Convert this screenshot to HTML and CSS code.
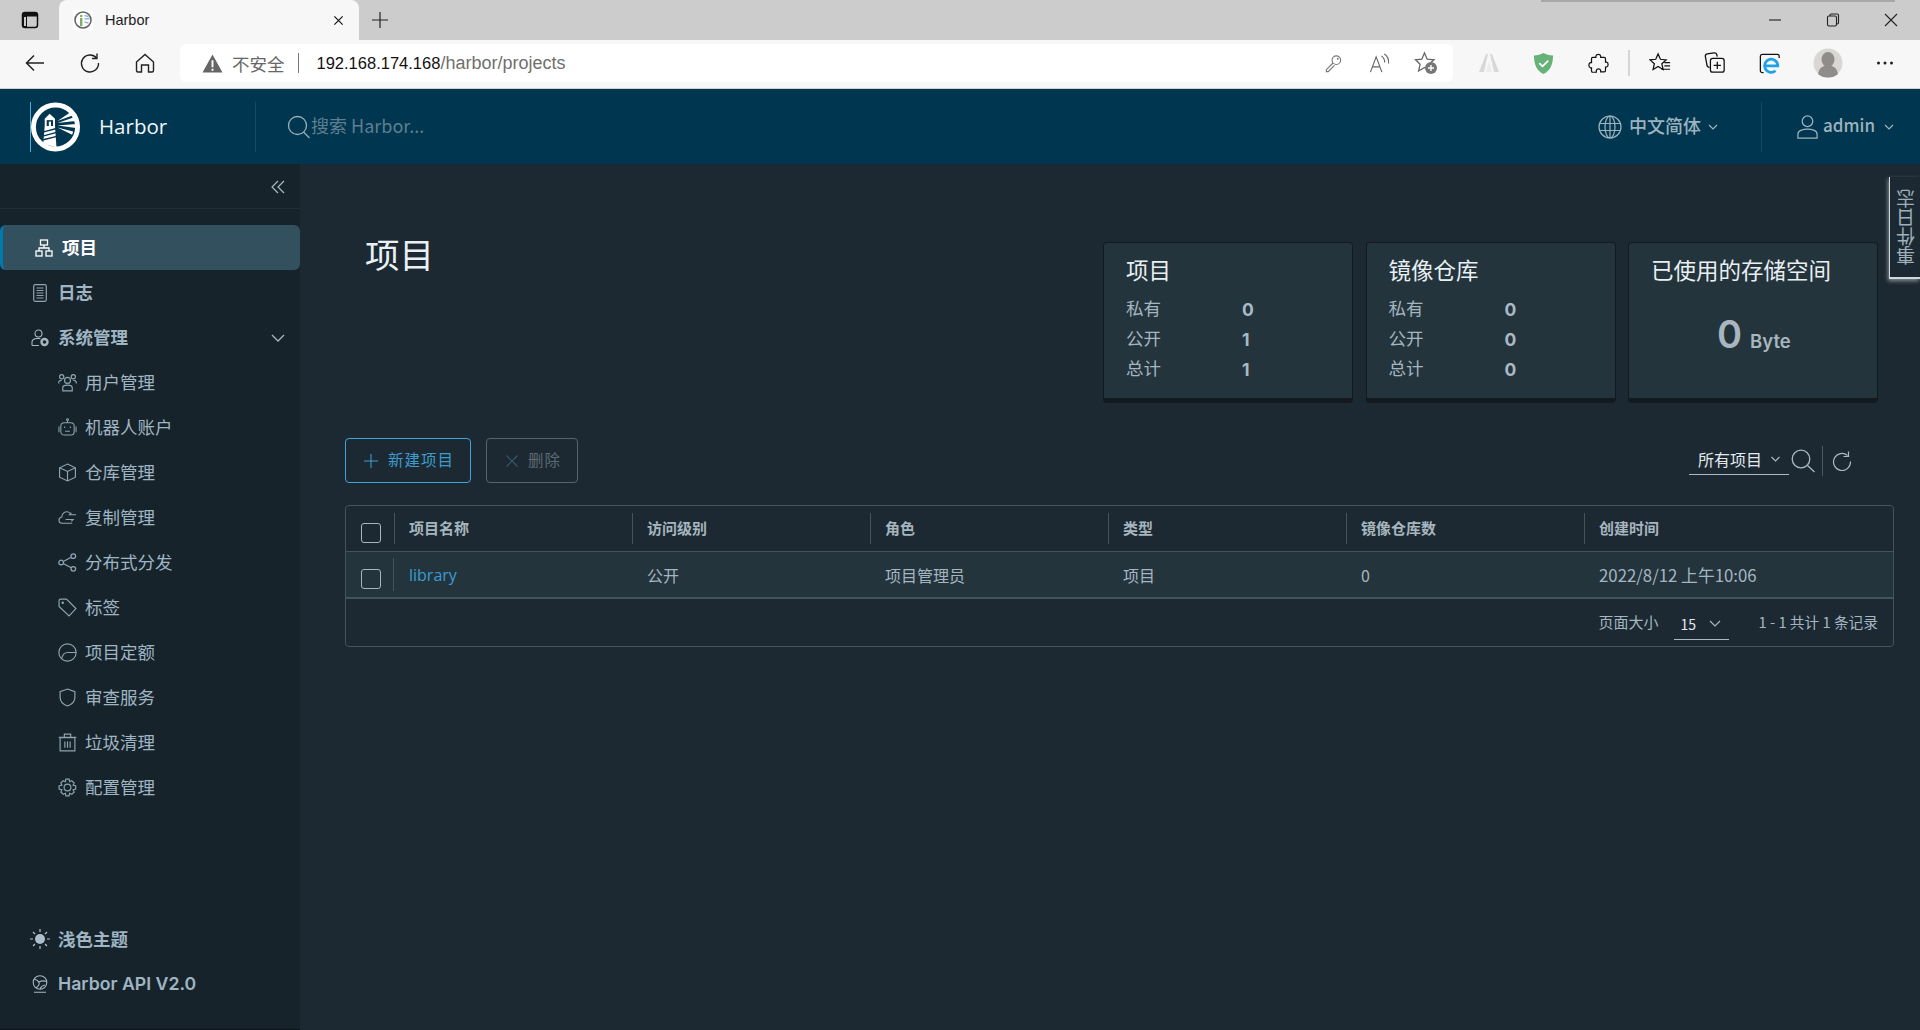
FILE: index.html
```html
<!DOCTYPE html>
<html lang="zh-CN">
<head>
<meta charset="utf-8">
<title>Harbor</title>
<link rel="stylesheet" href="styles.css">
</head>
<body>
<div class="app">
  <div class="tabstrip">
    <svg class="ico strip-side" viewBox="0 0 20 20"><rect x="2.5" y="2.5" width="15" height="15" rx="2.5" fill="none" stroke="#111" stroke-width="1.5"/><path d="M3 3h14v3.5H3zM3 6h4v11H3z" fill="#111"/><rect x="4" y="7" width="2" height="9" fill="#ccc"/></svg>
    <div class="tab">
      <svg class="ico fav" viewBox="0 0 20 20"><rect width="20" height="20" fill="#fff"/><circle cx="10" cy="10" r="8" fill="none" stroke="#666" stroke-width="1.6"/><rect x="7" y="8" width="2.4" height="8" fill="#7fae5c"/><circle cx="8.2" cy="6" r="1.3" fill="#7fae5c"/><path d="M11.5 5.5l4 1M11.5 9l5-.5M11.5 12l4 1" stroke="#8fb8e0" stroke-width="1.4"/></svg>
      <span class="tab-title">Harbor</span>
      <svg class="ico tab-x" viewBox="0 0 12 12"><path d="M1.5 1.5l9 9M10.5 1.5l-9 9" stroke="#111" stroke-width="1.3"/></svg>
    </div>
    <svg class="ico newtab" viewBox="0 0 18 18"><path d="M9 1v16M1 9h16" stroke="#222" stroke-width="1.2"/></svg>
    <div class="strip-shadow"></div>
    <div class="winbtns">
      <svg class="ico win" viewBox="0 0 14 14"><path d="M1 7h12" stroke="#222" stroke-width="1.1"/></svg>
      <svg class="ico win" viewBox="0 0 14 14"><rect x="1.5" y="3" width="9" height="10" rx="1.5" fill="none" stroke="#222" stroke-width="1.1"/><path d="M4 3V2.2Q4 1 5.2 1h6Q12.500 1 12.500 2.300v7.500Q12.500 11 11 11" fill="none" stroke="#222" stroke-width="1.1"/></svg>
      <svg class="ico win" viewBox="0 0 14 14"><path d="M1 1l12 12M13 1L1 13" stroke="#222" stroke-width="1.1"/></svg>
    </div>
  </div>

  <div class="toolbar">
    <svg class="ico tb back" viewBox="0 0 22 22"><path d="M20 11H3M10 3.500L2.500 11l7.500 7.500" fill="none" stroke="#222" stroke-width="1.500"/></svg>
    <svg class="ico tb reload" viewBox="0 0 22 22"><path d="M17.500 6A8.500 8.500 0 1 0 19.500 11" fill="none" stroke="#222" stroke-width="1.400"/><path d="M18 1.500V6.500H13" fill="none" stroke="#222" stroke-width="1.400"/></svg>
    <svg class="ico tb home" viewBox="0 0 22 22"><path d="M2.500 10L11 2.500 19.500 10v8.500q0 1.500-1.500 1.500h-3.500v-7h-7v7H4q-1.500 0-1.500-1.500z" fill="none" stroke="#222" stroke-width="1.400"/></svg>
    <div class="addr">
      <svg class="ico warn" viewBox="0 0 22 20"><path d="M11 .5l10.500 19H.5z" fill="#666"/><path d="M10 6.500h2v7.500h-2zM10 15.500h2v2h-2z" fill="#fff"/></svg>
      <span class="addr-warn">不安全</span>
      <span class="addr-sep"></span>
      <span class="url"><span class="url-host">192.168.174.168</span>/harbor/projects</span>
      <svg class="ico key" viewBox="0 0 20 20"><circle cx="13" cy="6.500" r="4.500" fill="none" stroke="#777" stroke-width="1.200"/><path d="M9.500 9.500L2.500 16.500V18.500H4.500L11 12" fill="none" stroke="#777" stroke-width="1.200"/><circle cx="14.500" cy="5" r="1" fill="#777"/></svg>
      <svg class="ico readaloud" viewBox="0 0 22 22"><path d="M1.500 20L7.500 4l6 16M3.500 14.500h8" fill="none" stroke="#666" stroke-width="1.200"/><path d="M13 3q3.500 2.500 3.500 7M16 1q5 3 4.500 10" fill="none" stroke="#666" stroke-width="1.200"/></svg>
      <svg class="ico addfav" viewBox="0 0 24 24"><path d="M10.500 2l2.700 6.200 6.800.6-5.100 4.500 1.500 6.700-5.900-3.500-5.900 3.500 1.500-6.700L1.500 8.800l6.300-.6z" fill="none" stroke="#666" stroke-width="1.300"/><circle cx="17" cy="17" r="6" fill="#777"/><path d="M17 14v6M14 17h6" stroke="#fff" stroke-width="1.400"/></svg>
    </div>
    <svg class="ico ext-m" viewBox="0 0 22 22"><path d="M1 20L8 2h2l-4 18zM21 20L14 2h-2l4 18z" fill="#d8d8d8"/><path d="M8 20l3-11 3 11z" fill="#ececec"/></svg>
    <svg class="ico ext-s" viewBox="0 0 22 24"><path d="M11 1c3 1.600 6 2.400 10 2.500C21 13 18 19.500 11 23 4 19.500 1 13 1 3.500 5 3.400 8 2.600 11 1z" fill="#67b279"/><path d="M6.500 11.500l3.500 3.500 6-6" fill="none" stroke="#fff" stroke-width="1.800"/></svg>
    <svg class="ico ext-p" viewBox="0 0 24 24"><path d="M9 3.500q.5-2 2.800-2t2.700 2v1.500h4q1.500 0 1.500 1.500v4h1.200q1.800.5 1.800 2.700t-1.800 2.800H20v4q0 1.500-1.500 1.500h-4v-1.500q-.5-1.800-2.500-1.800t-2.500 1.800V22h-4Q4 22 4 20.500V17H2.800Q1 16.500 1 14t1.800-3H4V6.500Q4 5 5.500 5H9z" fill="none" stroke="#111" stroke-width="1.400"/></svg>
    <span class="tb-sep"></span>
    <svg class="ico ext-f" viewBox="0 0 24 24"><path d="M9.500 2l2.400 5.600 6 .6-4.500 4 1.300 6-5.200-3.100-5.200 3.100 1.300-6L1 8.200l6-.6z" fill="none" stroke="#111" stroke-width="1.300"/><path d="M16 11h6M16 14.500h6M13 18h9" stroke="#111" stroke-width="1.300"/></svg>
    <svg class="ico ext-c" viewBox="0 0 24 24"><path d="M6 17Q3 16 3 13L1.500 5Q1 2.500 3.500 2L11 1q2.500-.2 3 2l.4 2" fill="none" stroke="#111" stroke-width="1.400"/><rect x="7" y="7" width="15" height="15" rx="2.500" fill="none" stroke="#111" stroke-width="1.400"/><path d="M14.500 10.500v8M10.500 14.500h8" stroke="#111" stroke-width="1.400"/></svg>
    <svg class="ico ext-e" viewBox="0 0 24 24"><path d="M5 22H4q-2.500 0-2.500-2.500v-15Q1.500 2 4 2h16q2 0 2 2v2" fill="none" stroke="#111" stroke-width="1.400"/><path d="M6.500 14.500h14a7.200 7.200 0 1 0-2.500 5.500" fill="none" stroke="#1ea3e6" stroke-width="3"/></svg>
    <svg class="ico avatar" viewBox="0 0 30 30"><circle cx="15" cy="15" r="14.500" fill="#d9d7d3"/><ellipse cx="15" cy="11.500" rx="6.500" ry="7.500" fill="#8f8c89"/><path d="M5 26q1-8.500 10-8.500T25 26q-4 3.500-10 3.500T5 26z" fill="#8f8c89"/></svg>
    <svg class="ico more" viewBox="0 0 18 4"><circle cx="2.500" cy="2" r="1.500" fill="#222"/><circle cx="9" cy="2" r="1.500" fill="#222"/><circle cx="15.500" cy="2" r="1.500" fill="#222"/></svg>
  </div>

  <header class="nav">
    <div class="brand">
      <svg class="ico logo" viewBox="0 0 50 50">
        <circle cx="25" cy="25" r="22.500" fill="#00364f" stroke="#fff" stroke-width="5"/>
        <path d="M19 11.500l5.500 5V24l1.500 22-13.500-4 1.500-18v-7.500z" fill="#fff"/>
        <rect x="16" y="18" width="6.500" height="6" fill="#00364f"/>
        <rect x="18.200" y="19.500" width="2.200" height="4.500" fill="#fff"/>
        <path d="M13 30l13-3.500M13 34l13-3.500M12.500 38l14-3.500" stroke="#00364f" stroke-width="1.400"/>
        <path d="M27 19l14-9.500 2 3.500zM27 21l17-6 1.500 4zM27 23.500l19-1.500v4zM27 25.500l16 4-1 3.500z" fill="#fff"/>
      </svg>
      <span class="brand-name">Harbor</span>
    </div>
    <div class="nav-search">
      <svg class="ico s-ico" viewBox="0 0 24 24"><circle cx="10.500" cy="10.500" r="9" fill="none" stroke="#9bb0bb" stroke-width="1.300"/><path d="M16.500 17l6 6" stroke="#9bb0bb" stroke-width="1.300"/></svg>
      <span class="s-text">搜索 Harbor...</span>
    </div>
    <div class="nav-right">
      <div class="nav-lang">
        <svg class="ico globe" viewBox="0 0 24 24"><g fill="none" stroke="#9db3be" stroke-width="1.200"><circle cx="12" cy="12" r="11"/><ellipse cx="12" cy="12" rx="5" ry="11"/><path d="M12 1v22M1.500 8.500h21M1.500 15.500h21"/></g></svg>
        <span class="nav-label">中文简体</span>
        <svg class="ico chev-s" viewBox="0 0 10 6"><path d="M1 1l4 4 4-4" fill="none" stroke="#9db3be" stroke-width="1.200"/></svg>
      </div>
      <div class="nav-user">
        <svg class="ico user" viewBox="0 0 24 26"><circle cx="12" cy="7" r="5.500" fill="none" stroke="#9db3be" stroke-width="1.300"/><path d="M2 24.500v-4q0-3 3-4 7-2.500 14 0 3 1 3 4v4z" fill="none" stroke="#9db3be" stroke-width="1.300"/></svg>
        <span class="nav-label">admin</span>
        <svg class="ico chev-s" viewBox="0 0 10 6"><path d="M1 1l4 4 4-4" fill="none" stroke="#9db3be" stroke-width="1.200"/></svg>
      </div>
    </div>
  </header>

  <div class="main">
    <aside class="side">
      <div class="collapse">
        <svg class="ico dbl" viewBox="0 0 14 14"><path d="M7 1L1 7l6 6M13 1L7 7l6 6" fill="none" stroke="#a8bac4" stroke-width="1.200"/></svg>
      </div>
      <nav class="side-nav">
        <a class="item top active">
          <svg class="ico top-ico" viewBox="0 0 18 18"><g fill="none" stroke="#fff" stroke-width="1.300"><rect x="5.500" y="1" width="7" height="5"/><rect x="1" y="12" width="6" height="5"/><rect x="11" y="12" width="6" height="5"/><path d="M9 6v3M4 12V9h10v3"/></g></svg>
          <b>项目</b>
        </a>
        <a class="item top">
          <svg class="ico top-ico log" viewBox="0 0 14 18"><g fill="none" stroke="#8fa4b0" stroke-width="1.200"><rect x=".7" y=".7" width="12.600" height="16.600" rx="1.500"/><path d="M3.500 4h7M3.500 6.500h7M3.500 9h7M3.500 11.500h7M3.500 14h7"/></g></svg>
          <b>日志</b>
        </a>
        <a class="item top sys">
          <svg class="ico top-ico sysi" viewBox="0 0 18 18"><g fill="none" stroke="#a5b7c1" stroke-width="1.100"><circle cx="7.500" cy="4.500" r="3.500"/><path d="M1 16.500V13q0-2.500 3-3.300 3-.7 5.500 0M1 16.500h7"/></g><circle cx="13.500" cy="13" r="3" fill="none" stroke="#a5b7c1" stroke-width="2.400"/></svg>
          <b>系统管理</b>
          <svg class="ico sys-chev" viewBox="0 0 14 8"><path d="M1 1l6 6 6-6" fill="none" stroke="#a5b7c1" stroke-width="1.300"/></svg>
        </a>
        <a class="item sub">
          <svg class="ico sub-ico" viewBox="0 0 18 18"><g fill="none" stroke="#8fa4b0" stroke-width="1.100"><circle cx="9" cy="7" r="2.800"/><path d="M4.500 17v-3q0-2.500 4.500-2.500t4.500 2.500v3z"/><circle cx="3.500" cy="3.500" r="2"/><circle cx="14.500" cy="3.500" r="2"/><path d="M.7 10V8.500Q1 7 3.500 7M17.300 10V8.500Q17 7 14.500 7"/></g></svg>
          <span>用户管理</span>
        </a>
        <a class="item sub">
          <svg class="ico sub-ico" viewBox="0 0 20 20"><g fill="none" stroke="#8fa4b0" stroke-width="1.100"><rect x="3" y="5" width="14" height="13" rx="3.500"/><path d="M10 5V2.500M1 9v6M19 9v6"/><circle cx="10" cy="1.800" r="1"/><path d="M7 9v1.500M13 9v1.500M7.500 14h5"/></g></svg>
          <span>机器人账户</span>
        </a>
        <a class="item sub">
          <svg class="ico sub-ico" viewBox="0 0 18 18"><g fill="none" stroke="#8fa4b0" stroke-width="1.100"><path d="M9 1l7.500 3.500v9L9 17l-7.500-3.500v-9z"/><path d="M1.500 4.500L9 8l7.500-3.500M9 8v9"/></g></svg>
          <span>仓库管理</span>
        </a>
        <a class="item sub">
          <svg class="ico sub-ico" viewBox="0 0 20 18"><g fill="none" stroke="#8fa4b0" stroke-width="1.100"><path d="M15 15H4Q1 15 1 12t3-3.500Q4.500 3.500 9 3q3-.2 5 2.500"/><path d="M19 6h-7l2-2M8 11h8l-2 2"/></g></svg>
          <span>复制管理</span>
        </a>
        <a class="item sub">
          <svg class="ico sub-ico" viewBox="0 0 18 18"><g fill="none" stroke="#8fa4b0" stroke-width="1.200"><circle cx="3" cy="9" r="2.200"/><circle cx="14.500" cy="3" r="2.200"/><circle cx="14.500" cy="15" r="2.200"/><path d="M5 8l7.500-4M5 10l7.500 4"/></g></svg>
          <span>分布式分发</span>
        </a>
        <a class="item sub">
          <svg class="ico sub-ico" viewBox="0 0 18 18"><g fill="none" stroke="#8fa4b0" stroke-width="1.100"><path d="M1 2.500Q1 1 2.500 1H8l9 9-6.500 7L1 8z"/><circle cx="4.500" cy="4.500" r=".7"/></g></svg>
          <span>标签</span>
        </a>
        <a class="item sub">
          <svg class="ico sub-ico" viewBox="0 0 18 18"><g fill="none" stroke="#8fa4b0" stroke-width="1.100"><circle cx="9" cy="9" r="8.200"/><path d="M3.500 14.500Q5 9 9 9h8"/></g></svg>
          <span>项目定额</span>
        </a>
        <a class="item sub">
          <svg class="ico sub-ico" viewBox="0 0 18 18"><path d="M9 1l7 2.500V9q0 5.500-7 8-7-2.500-7-8V3.500z" fill="none" stroke="#8fa4b0" stroke-width="1.100"/></svg>
          <span>审查服务</span>
        </a>
        <a class="item sub">
          <svg class="ico sub-ico" viewBox="0 0 18 18"><g fill="none" stroke="#8fa4b0" stroke-width="1.100"><path d="M2 4.500h14V17H2zM.5 4h17M6 3.500V1h6v2.500M6.500 8v6M9 8v6M11.500 8v6"/></g></svg>
          <span>垃圾清理</span>
        </a>
        <a class="item sub">
          <svg class="ico sub-ico" viewBox="0 0 18 18"><g fill="none" stroke="#8fa4b0" stroke-width="1.100"><circle cx="9" cy="9" r="3.200"/><path d="M7.500 1h3l.5 2.500 2-1 2.300 2.200-1 2 2.500.8v3l-2.500.8 1 2L13 15.500l-2-1-.5 2.500h-3L7 14.500l-2 1-2.300-2.200 1-2L1 10.500v-3l2.700-.8-1-2L5 2.500l2 1z"/></g></svg>
          <span>配置管理</span>
        </a>
      </nav>
      <div class="side-foot">
        <a class="item top foot">
          <svg class="ico top-ico sun" viewBox="0 0 20 20"><circle cx="10" cy="10" r="5" fill="#aebfc9"/><path d="M10 0v3M10 17v3M0 10h3M17 10h3M3 3l2 2M15 15l2 2M3 17l2-2M15 5l2-2" stroke="#aebfc9" stroke-width="1.200"/></svg>
          <b>浅色主题</b>
        </a>
        <a class="item top foot">
          <svg class="ico top-ico api" viewBox="0 0 18 18"><g fill="none" stroke="#a5b7c1" stroke-width="1.100"><circle cx="9" cy="7.500" r="6.800"/><path d="M3 4q4 1 5 3.500t-3 5.500M8 7q4-2 7-.5M9 14q1-3 5-4M3 17.300h12"/></g></svg>
          <b class="latin">Harbor API V2.0</b>
        </a>
      </div>
    </aside>

    <section class="content">
      <div class="log-tab"><span>事件日志</span></div>
      <div class="summary">
        <h1 class="title">项目</h1>
        <div class="cards">
          <div class="card">
            <h2>项目</h2>
            <div class="stat"><span>私有</span><b>0</b></div>
            <div class="stat"><span>公开</span><b>1</b></div>
            <div class="stat"><span>总计</span><b>1</b></div>
          </div>
          <div class="card">
            <h2>镜像仓库</h2>
            <div class="stat"><span>私有</span><b>0</b></div>
            <div class="stat"><span>公开</span><b>0</b></div>
            <div class="stat"><span>总计</span><b>0</b></div>
          </div>
          <div class="card">
            <h2>已使用的存储空间</h2>
            <div class="storage"><span class="big">0</span><span class="unit">Byte</span></div>
          </div>
        </div>
      </div>

      <div class="actions">
        <button class="btn primary"><svg class="ico btn-ico" viewBox="0 0 14 14"><path d="M7 0v14M0 7h14" stroke="#3d9ccb" stroke-width="1.100"/></svg><span>新建项目</span></button>
        <button class="btn disabled"><svg class="ico btn-ico x" viewBox="0 0 12 12"><path d="M.5.5l11 11M11.500.5l-11 11" stroke="#38596a" stroke-width="1.100"/></svg><span>删除</span></button>
        <div class="filters">
          <div class="filter-select"><span>所有项目</span><svg class="ico chev-f" viewBox="0 0 10 6"><path d="M1 1l4 4 4-4" fill="none" stroke="#a8bac4" stroke-width="1.100"/></svg></div>
          <svg class="ico f-search" viewBox="0 0 24 24"><circle cx="10" cy="10" r="8.800" fill="none" stroke="#a8bac4" stroke-width="1.300"/><path d="M16.500 16.500l7 6.500" stroke="#a8bac4" stroke-width="1.300"/></svg>
          <span class="f-sep"></span>
          <svg class="ico f-refresh" viewBox="0 0 20 20"><path d="M15.500 4.500A8.500 8.500 0 1 0 18.500 10.500" fill="none" stroke="#a8bac4" stroke-width="1.200"/><path d="M16.500 .5v5h-5" fill="none" stroke="#a8bac4" stroke-width="1.200"/></svg>
        </div>
      </div>

      <div class="table">
        <div class="row head">
          <div class="cell chk"><span class="box"></span></div>
          <div class="cell">项目名称</div>
          <div class="cell">访问级别</div>
          <div class="cell">角色</div>
          <div class="cell">类型</div>
          <div class="cell">镜像仓库数</div>
          <div class="cell">创建时间</div>
        </div>
        <div class="row body-row">
          <div class="cell chk"><span class="box"></span></div>
          <div class="cell link">library</div>
          <div class="cell">公开</div>
          <div class="cell">项目管理员</div>
          <div class="cell">项目</div>
          <div class="cell">0</div>
          <div class="cell date">2022/8/12 上午10:06</div>
        </div>
        <div class="foot-row">
          <span class="pg-label">页面大小</span>
          <div class="page-size"><span>15</span><svg class="ico chev-p" viewBox="0 0 12 7"><path d="M1 1l5 5 5-5" fill="none" stroke="#a8bac4" stroke-width="1.100"/></svg></div>
          <span class="range">1 - 1 共计 1 条记录</span>
        </div>
      </div>
    </section>
  </div>
</div>
</body>
</html>
```
FILE: styles.css
```css
* { box-sizing: border-box; }
html, body { margin: 0; padding: 0; height: 100%; overflow: hidden; }
body { font-family: "Noto Sans CJK SC", "Noto Sans", sans-serif; background: #1b2a32; }
.app { width: 1920px; height: 1030px; display: flex; flex-direction: column; overflow: hidden; }
.ico { display: block; flex: none; }

/* browser tab strip */
.tabstrip { height: 40px; background: #cccccc; display: flex; align-items: center; position: relative; flex: none; }
.strip-side { width: 20px; height: 20px; margin-left: 20px; }
.tab { width: 300px; height: 40px; margin-left: 19px; background: #f7f7f7; border-radius: 8px 8px 0 0; display: flex; align-items: center; padding-left: 14px; }
.fav { width: 20px; height: 20px; }
.tab-title { margin-left: 12px; font: 14.500px "Liberation Sans", sans-serif; color: #222; }
.tab-x { width: 11px; height: 11px; margin-left: auto; margin-right: 15px; }
.newtab { width: 18px; height: 18px; margin-left: 12px; }
.strip-shadow { position: absolute; left: 1541px; top: 0; width: 354px; height: 2px; background: #a8a8a8; }
.winbtns { margin-left: auto; display: flex; gap: 44px; padding-right: 22px; }
.win { width: 14px; height: 14px; }

/* browser toolbar */
.toolbar { height: 49px; flex: none; background: #f7f7f7; border-bottom: 1px solid #d0d0d0; display: flex; align-items: center; padding-bottom: 2px; }
.back, .reload, .home { width: 22px; height: 22px; }
.back { margin-left: 24px; }
.reload { margin-left: 33px; }
.home { margin-left: 33px; }
.addr { width: 1273px; height: 38px; margin-left: 24px; background: #fff; border-radius: 6px; display: flex; align-items: center; padding: 0 15px 0 22px; color: #666; }
.warn { width: 21px; height: 19px; }
.addr-warn { margin-left: 9px; font-size: 17.500px; color: #666; }
.addr-sep { width: 1px; height: 20px; background: #777; margin-left: 13px; }
.url { margin-left: 18px; font: 18px "Liberation Sans", sans-serif; color: #6f6f6f; }
.url-host { color: #111; font-size: 16.500px; }
.key { width: 19px; height: 19px; margin-left: auto; }
.readaloud { width: 21px; height: 21px; margin-left: 26px; }
.addfav { width: 24px; height: 24px; margin-left: 24px; }
.ext-m { width: 22px; height: 22px; margin-left: 25px; }
.ext-s { width: 21px; height: 23px; margin-left: 33px; }
.ext-p { width: 21px; height: 23px; margin-left: 34px; }
.tb-sep { width: 2px; height: 26px; background: #d5d5d5; margin-left: 19px; }
.ext-f { width: 23px; height: 23px; margin-left: 19px; }
.ext-c { width: 22px; height: 24px; margin-left: 32px; }
.ext-e { width: 22px; height: 23px; margin-left: 33px; }
.avatar { width: 30px; height: 30px; margin-left: 32px; }
.more { width: 18px; height: 4px; margin-left: 33px; }

/* app header */
.nav { height: 75px; flex: none; background: #00364f; display: flex; align-items: center; }
.brand { height: 50px; margin-left: 30px; width: 226px; display: flex; align-items: center; border-right: 1px solid #164a62; }
.logo { width: 50px; height: 50px; border-left: 1px solid #49afd9; }
.brand-name { margin-left: 19px; padding-bottom: 2px; font: 20.500px "Open Sans", sans-serif; color: #f1f6f8; }
.nav-search { display: flex; align-items: center; margin-left: 31px; }
.s-ico { width: 24px; height: 24px; }
.s-text { font-size: 18px; color: #5e7f8f; padding-bottom: 3px; }
.nav-right { margin-left: auto; display: flex; align-items: center; height: 50px; }
.nav-label { padding-bottom: 4px; }
.nav-lang { display: flex; align-items: center; color: #9db3be; font-size: 18px; font-weight: 500; padding-right: 43px; border-right: 1px solid #164a62; height: 50px; }
.globe { width: 24px; height: 24px; margin-right: 7px; }
.nav-lang .chev-s { margin-left: 7px; }
.chev-s { width: 10px; height: 6px; }
.nav-user { display: flex; align-items: center; color: #9db3be; font-size: 17px; font-weight: 500; padding: 0 26px 0 34px; }
.user { width: 23px; height: 26px; margin-right: 4px; }
.nav-user .chev-s { margin-left: 9px; }

/* page body */
.main { flex: 1; display: flex; min-height: 0; }
.side { width: 300px; flex: none; background: #17232b; display: flex; flex-direction: column; border-bottom: 1px solid #0c1216; }
.collapse { height: 45px; border-bottom: 1px solid #222e36; display: flex; justify-content: flex-end; align-items: center; padding: 0 15px 0 0; flex: none; margin-bottom: 16px; }
.dbl { width: 14px; height: 14px; margin-top: 2px; }
.side-nav { display: flex; flex-direction: column; }
.item { height: 45px; display: flex; align-items: center; color: #9fb5c3; font-size: 17.500px; flex: none; }
.item b { font-weight: 700; }
.side-nav .item b, .side-nav .item span { padding-bottom: 3px; }
.top { padding-left: 33px; }
.sub { padding-left: 58px; }
.active { background: #33505f; color: #fff; border-left: 3px solid #0079ad; border-radius: 6px; padding-left: 32px; }
.top-ico { width: 18px; height: 18px; margin-right: 8px; }
.active .top-ico { margin-right: 9px; }
.log { width: 14px; margin-right: 11px; }
.sysi { margin-left: -2px; margin-right: 9px; }
.sys-chev { width: 14px; height: 8px; margin-left: auto; margin-right: 15px; }
.sub-ico { width: 19px; height: 19px; margin-right: 8px; }
.side-foot { margin-top: auto; padding-bottom: 23px; }
.sun { width: 20px; height: 20px; margin-left: -3px; margin-right: 8px; }
.api { margin-left: -2px; margin-right: 9px; }
.latin { font-family: Inter, "Open Sans", sans-serif; font-weight: 600 !important; font-size: 17.700px; }

.content { flex: 1; position: relative; background: #1c2932; padding: 78px 26px 0 45px; }
.log-tab { position: absolute; right: 0; top: 13px; width: 31px; height: 102px; background: #1c2932; border-left: 1px solid #cfd8dc; border-bottom: 2px solid #cfd8dc; box-shadow: -1px 2px 4px rgba(220,225,228,.55); display: flex; align-items: center; justify-content: center; }
.log-tab span { writing-mode: vertical-rl; transform: rotate(180deg); font-size: 19px; line-height: 1; color: #9eb0ba; }

.summary { display: flex; justify-content: space-between; padding: 0 16px 0 20px; }
.title { margin: -12px 0 0; font-size: 34.500px; font-weight: 400; line-height: 46px; color: #eaf0f3; }
.cards { display: flex; gap: 12.500px; }
.card { width: 250px; height: 161px; background: #24343c; border: 1px solid #121a20; border-bottom: 5px solid #121a20; border-radius: 4px; padding: 8px 22px 0; }
.card:last-child { padding-left: 22px; padding-right: 0; }
.card h2 { margin: 0 0 5px; font-size: 22.500px; font-weight: 400; line-height: 36px; color: #e9eff2; white-space: nowrap; }
.stat { height: 30px; display: flex; align-items: center; color: #a4b6c1; font-size: 17.500px; }
.stat span { width: 116px; }
.stat b { font: 700 17.500px Inter, "Open Sans", sans-serif; color: #a9bac4; padding-top: 4px; }
.storage { display: flex; align-items: baseline; padding-left: 66px; margin-top: 25px; color: #a9b6bf; }
.big { font: 600 38px/44px Inter, sans-serif; }
.unit { font: 600 18.500px Inter, sans-serif; margin-left: 8px; }

.actions { display: flex; align-items: center; margin-top: 35px; height: 45px; }
.btn { height: 45px; background: transparent; border-radius: 4px; display: flex; align-items: center; font-family: inherit; font-size: 15.500px; letter-spacing: 1px; padding: 0; }
.btn span { padding-bottom: 3px; }
.primary { width: 126px; border: 1px solid #3ba8d9; color: #3d9ccb; padding-left: 18px; }
.disabled { width: 92px; margin-left: 15px; border: 1px solid #56646c; color: #5c6a72; padding-left: 19px; }
.btn-ico { width: 14px; height: 14px; margin-right: 10px; }
.x { width: 12px; height: 12px; margin-right: 10px; }
.filters { margin-left: auto; display: flex; align-items: center; padding-right: 42px; }
.filter-select { width: 100px; height: 30px; border-bottom: 1px solid #a8bac4; display: flex; align-items: center; padding-left: 9px; color: #e3eaee; font-size: 16px; margin-top: -1px; }
.filter-select span { padding-bottom: 2px; }
.chev-f { width: 11px; height: 6px; margin-left: 8px; margin-top: -2px; }
.f-search { width: 24px; height: 24px; margin-left: 2px; }
.f-sep { width: 1px; height: 30px; background: #4a5a64; margin-left: 7px; }
.f-refresh { width: 20px; height: 20px; margin-left: 9px; }

.table { margin-top: 22px; border: 1px solid #44535c; border-radius: 4px; }
.row { display: grid; grid-template-columns: 48px repeat(5, 238px) 1fr; height: 46px; }
.head { border-bottom: 1px solid #44535c; align-items: center; font-size: 15px; font-weight: 700; color: #a6b5be; }
.head .cell { height: 31px; border-left: 1px solid #44535c; padding: 0 0 2px 14px; display: flex; align-items: center; margin-top: -1px; }
.head .chk { border-left: 0; padding: 0; }
.head .box { margin-top: 10px; }
.body-row { background: #24343c; height: 47px; border-bottom: 2px solid #44535c; align-items: center; font-size: 16px; color: #a4b6c1; }
.body-row .cell { padding: 1px 0 0 15px; }
.body-row .chk { height: 33px; padding: 0; border-right: 1px solid #44535c; width: 48px; }
.chk { display: flex; align-items: center; justify-content: flex-start; }
.cell.chk { padding-left: 15px !important; }
.box { width: 20px; height: 20px; border: 1px solid #a8b5bd; border-radius: 3px; flex: none; margin-top: 9px; }
.link { color: #3b9cd4; font-family: "Open Sans", sans-serif; }
.date { font-size: 16.800px; }
.foot-row { height: 47px; display: flex; align-items: center; justify-content: flex-end; padding-right: 15px; font-size: 15px; color: #a4b6c1; }
.pg-label, .range { padding-bottom: 3px; }
.page-size { width: 55px; height: 30px; margin: 4px 0 0 15px; border-bottom: 1px solid #a8bac4; display: flex; align-items: center; padding-left: 7px; color: #e3eaee; font-size: 14px; }
.page-size span { padding-bottom: 1px; }
.chev-p { width: 12px; height: 7px; margin-left: 13px; margin-top: -2px; }
.range { margin-left: 30px; font-size: 14.700px; }
```
